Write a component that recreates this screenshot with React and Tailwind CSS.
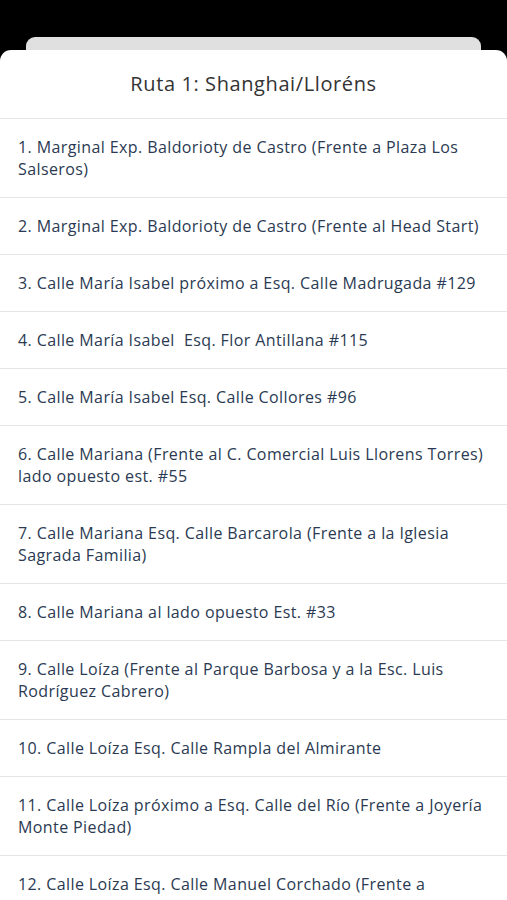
const stops = [
  '1. Marginal Exp. Baldorioty de Castro (Frente a Plaza Los Salseros)',
  '2. Marginal Exp. Baldorioty de Castro (Frente al Head Start)',
  '3. Calle María Isabel próximo a Esq. Calle Madrugada #129',
  '4. Calle María Isabel  Esq. Flor Antillana #115',
  '5. Calle María Isabel Esq. Calle Collores #96',
  '6. Calle Mariana (Frente al C. Comercial Luis Llorens Torres) lado opuesto est. #55',
  '7. Calle Mariana Esq. Calle Barcarola (Frente a la Iglesia Sagrada Familia)',
  '8. Calle Mariana al lado opuesto Est. #33',
  '9. Calle Loíza (Frente al Parque Barbosa y a la Esc. Luis Rodríguez Cabrero)',
  '10. Calle Loíza Esq. Calle Rampla del Almirante',
  '11. Calle Loíza próximo a Esq. Calle del Río (Frente a Joyería Monte Piedad)',
  '12. Calle Loíza Esq. Calle Manuel Corchado (Frente a Farmacia El Amal)',
];

export default function App() {
  return (
    <div className="h-[900px] overflow-hidden bg-black font-['Open_Sans',sans-serif]">
      <div className="pt-[37px]">
        <div className="mx-[26px] h-[20px] rounded-t-[9px] bg-[#e0e0e0]" />
        <div className="-mt-[7px] rounded-t-[11px] bg-white">
          <div className="h-[69px] flex items-center justify-center border-b border-[#e6e6e6]">
            <h1 className="text-[20px] text-[#333] tracking-[0.6px]">Ruta 1: Shanghai/Lloréns</h1>
          </div>
          <ul>
            {stops.map((s) => (
              <li key={s} className="px-[18px] py-[17px] border-b border-[#e6e6e6] text-[16px] leading-[22px] tracking-[0.4px] text-[#2b3a52] whitespace-pre-wrap">
                {s}
              </li>
            ))}
          </ul>
        </div>
      </div>
    </div>
  );
}
